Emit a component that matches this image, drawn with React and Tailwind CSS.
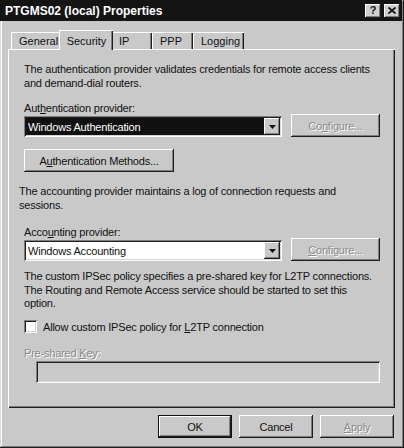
const font = { fontFamily: '"Liberation Sans", Arial, sans-serif' };

const raised =
  'shadow-[inset_-1px_-1px_#1e1e1e,inset_1px_1px_#ffffff,inset_-2px_-2px_#7e7e7e]';
const sunken =
  'shadow-[inset_1px_1px_#7e7e7e,inset_-1px_-1px_#ffffff,inset_2px_2px_#1e1e1e,inset_-2px_-2px_#d6d6d6]';

function Button({ children, className = '', disabled }) {
  return (
    <div
      className={`flex items-center justify-center bg-[#c9c9c9] ${raised} ${className} ${
        disabled ? 'text-[#8a8a8a] [text-shadow:1px_1px_0_#fff]' : 'text-[#111]'
      }`}
    >
      {children}
    </div>
  );
}

function Combo({ value, selected }) {
  return (
    <div className={`flex h-[21px] w-[258px] items-center bg-white p-[2px] ${sunken}`}>
      <div
        className={`flex h-full flex-1 items-center pl-[2px] ${
          selected ? 'bg-[#111] text-white' : 'text-[#111]'
        }`}
      >
        {value}
      </div>
      <div className={`flex h-[17px] w-[16px] items-center justify-center bg-[#c9c9c9] ${raised}`}>
        <svg width="7" height="4" viewBox="0 0 7 4">
          <path d="M0 0h7L3.5 4z" fill="#111" />
        </svg>
      </div>
    </div>
  );
}

function Tab({ label, active, className = '' }) {
  if (active) {
    return (
      <div
        className={`relative z-10 -mx-[2px] -mb-[1px] flex h-[20px] items-center justify-center border-l border-t border-white bg-[#c9c9c9] shadow-[inset_-1px_0_#1e1e1e,inset_-2px_0_#7e7e7e] ${className}`}
      >
        {label}
      </div>
    );
  }
  return (
    <div
      className={`mt-[3px] flex h-[17px] items-center border-l border-t border-white px-[7px] shadow-[inset_-1px_0_#1e1e1e,inset_-2px_0_#7e7e7e] ${className}`}
    >
      {label}
    </div>
  );
}

export default function App() {
  return (
    <div
      style={font}
      className="relative flex h-[448px] w-[404px] flex-col bg-[#c9c9c9] px-[2px] text-[11px] leading-[14px] tracking-[-0.2px] text-[#111] shadow-[inset_-1px_-1px_#1e1e1e,inset_1px_1px_#dcdcdc,inset_-2px_-2px_#7e7e7e,inset_2px_2px_#ffffff]"
    >
      {/* title bar */}
      <div className="-ml-[2px] flex h-[21px] items-center justify-between bg-[#141414] pl-[5px] pr-[2px]">
        <span className="text-[12px] font-bold tracking-normal text-white">PTGMS02 (local) Properties</span>
        <div className="flex gap-[3px]">
          <div className={`flex h-[14px] w-[16px] items-center justify-center bg-[#d0d0d0] text-[11px] font-bold leading-none ${raised}`}>
            ?
          </div>
          <div className={`flex h-[14px] w-[16px] items-center justify-center bg-[#d0d0d0] ${raised}`}>
            <svg width="8" height="7" viewBox="0 0 8 7">
              <path d="M0.5 0.5l7 6M7.5 0.5l-7 6" stroke="#111" strokeWidth="1.8" />
            </svg>
          </div>
        </div>
      </div>

      {/* tabs */}
      <div className="ml-[9px] mt-[8px] flex items-end tracking-normal">
        <Tab label="General" className="w-[50px]" />
        <Tab label="Security" active className="w-[54px]" />
        <Tab label="IP" className="w-[41px]" />
        <Tab label="PPP" className="w-[41px]" />
        <Tab label="Logging" className="w-[51px]" />
      </div>

      {/* panel */}
      <div className="ml-[6px] flex h-[359px] w-[387px] flex-col border-l border-t border-white pl-[15px] shadow-[inset_-1px_-1px_#1e1e1e,inset_-2px_-2px_#7e7e7e]">
        <p className="mt-[12px]">
          The authentication provider validates credentials for remote access clients
          <br />
          and demand-dial routers.
        </p>
        <p className="mt-[11px]">
          Aut<u>h</u>entication provider:
        </p>
        <div className="mt-[1px] flex items-center gap-[9px]">
          <Combo value="Windows Authentication" selected />
          <Button disabled className="-mt-[2px] h-[23px] w-[89px]">
            Co<u>n</u>figure...
          </Button>
        </div>
        <Button className="mt-[12px] h-[23px] w-[150px]">
          A<u>u</u>thentication Methods...
        </Button>
        <p className="-ml-[5px] mt-[12px]">
          The accounting provider maintains a log of connection requests and
          <br />
          sessions.
        </p>
        <p className="mt-[13px]">
          Acco<u>u</u>nting provider:
        </p>
        <div className="mt-[1px] flex items-center gap-[9px]">
          <Combo value="Windows Accounting" />
          <Button disabled className="-mt-[2px] h-[23px] w-[89px]">
            <u>C</u>onfigure...
          </Button>
        </div>
        <p className="mt-[9px] leading-[13.5px]">
          The custom IPSec policy specifies a pre-shared key for L2TP connections.
          <br />
          The Routing and Remote Access service should be started to set this
          <br />
          option.
        </p>
        <div className="mt-[9px] flex items-center gap-[6px]">
          <div className={`h-[13px] w-[13px] bg-white ${sunken}`} />
          <span>
            Allow custom IPSec policy for <u>L</u>2TP connection
          </span>
        </div>
        <p className="mt-[12px] text-[#8a8a8a] [text-shadow:1px_1px_0_#fff]">
          Pre-shared <u>K</u>ey:
        </p>
        <div className={`ml-[12px] mt-[1px] h-[22px] w-[344px] bg-[#c9c9c9] ${sunken}`} />
      </div>

      {/* bottom buttons */}
      <div className="ml-[156px] mt-[7px] flex gap-[7px]">
        <div className="h-[23px] w-[74px] border border-[#111]">
          <Button className="h-full w-full">OK</Button>
        </div>
        <Button className="h-[23px] w-[74px]">Cancel</Button>
        <Button disabled className="h-[23px] w-[74px]">
          <u>A</u>pply
        </Button>
      </div>
    </div>
  );
}
